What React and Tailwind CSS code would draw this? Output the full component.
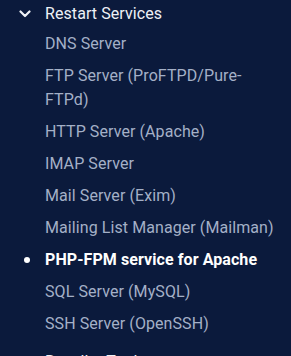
const ITEMS = [
  'DNS Server',
  'FTP Server (ProFTPD/Pure-FTPd)',
  'HTTP Server (Apache)',
  'IMAP Server',
  'Mail Server (Exim)',
  'Mailing List Manager (Mailman)',
  'PHP-FPM service for Apache',
  'SQL Server (MySQL)',
  'SSH Server (OpenSSH)',
];

const ACTIVE = 'PHP-FPM service for Apache';

function Chevron({ open }) {
  return (
    <svg
      width="12"
      height="8"
      viewBox="0 0 12 8"
      fill="none"
      stroke="currentColor"
      strokeWidth="2.2"
      strokeLinecap="round"
      strokeLinejoin="round"
      className={open ? '' : '-rotate-90'}
    >
      <polyline points="1.5 1.5 6 6 10.5 1.5" />
    </svg>
  );
}

export default function App() {
  return (
    <div
      className="w-[291px] h-[356px] overflow-hidden bg-[#0b1a3c] text-[16px] tracking-[0.08px]"
      style={{ fontFamily: 'Roboto, "Liberation Sans", sans-serif' }}
    >
      <div className="-mt-[2px]">
        <div className="flex items-center h-[32px] text-[#eef1f6]">
          <span className="w-[45px] shrink-0 flex pl-[19px]">
            <Chevron open />
          </span>
          <span className="leading-6">Restart Services</span>
        </div>
        <ul className="-mt-[2px]">
          {ITEMS.map((item) => (
            <li key={item} className="flex py-1 leading-6">
              <span className="w-[45px] shrink-0 flex justify-center pl-[8px] pt-[9px]">
                {item === ACTIVE && <span className="w-[6px] h-[6px] rounded-full bg-white" />}
              </span>
              <span
                className={
                  item === ACTIVE
                    ? 'font-bold text-white pr-4'
                    : 'text-[#a4b0c7] pr-4'
                }
              >
                {item}
              </span>
            </li>
          ))}
        </ul>
        <div className="flex items-center h-[32px] mt-[6px] text-[#eef1f6]">
          <span className="w-[45px] shrink-0 flex pl-[19px]">
            <Chevron />
          </span>
          <span className="leading-6">Reseller Tools</span>
        </div>
      </div>
    </div>
  );
}
